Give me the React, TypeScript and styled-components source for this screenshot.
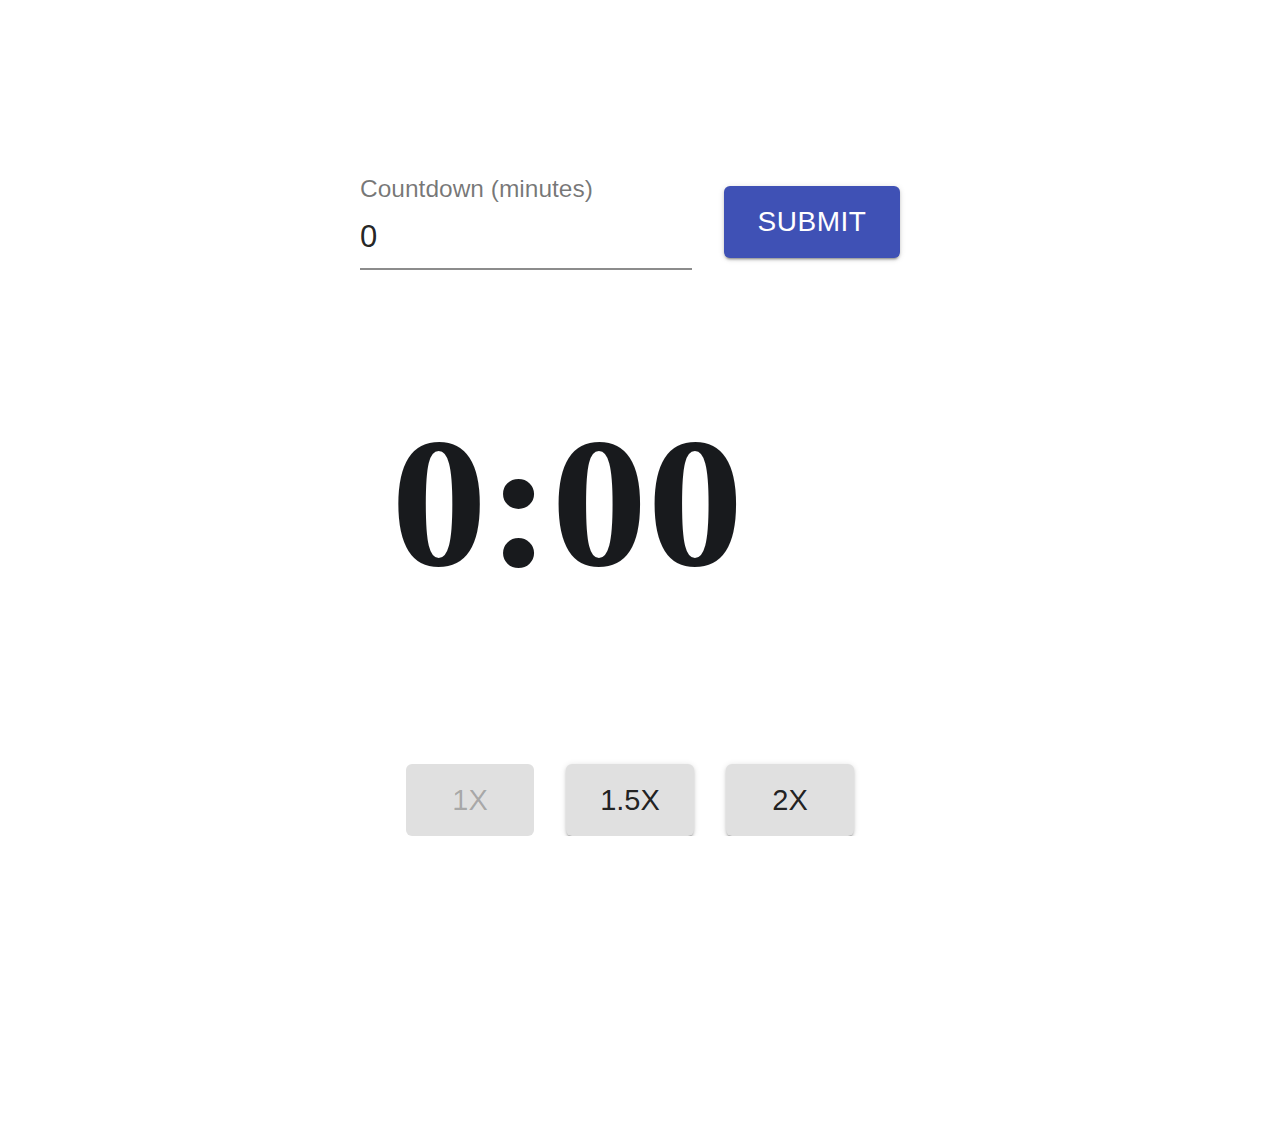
import React from "react";
import styled, { createGlobalStyle } from "styled-components";

const Global = createGlobalStyle`
  html, body { margin: 0; padding: 0; background: #fff; }
  body { font-family: "Liberation Sans", Arial, sans-serif; }
`;

const shadow =
  "0 3px 2px -2px rgba(0,0,0,0.28), 0 2px 3px 0 rgba(0,0,0,0.16), 0 1px 6px 0 rgba(0,0,0,0.12)";

const Page = styled.div`
  width: 1260px;
  padding-top: 173px;
  display: flex;
  flex-direction: column;
  align-items: center;
`;

const Form = styled.div`
  display: flex;
  align-items: flex-start;
  gap: 32px;
  width: 540px;
`;

const Field = styled.label`
  display: flex;
  flex-direction: column;
  width: 332px;
`;

const Label = styled.span`
  font-size: 24.5px;
  color: rgba(0, 0, 0, 0.54);
  line-height: 32px;
`;

const Input = styled.input`
  font-family: "Liberation Sans", Arial, sans-serif;
  font-size: 31px;
  color: rgba(0, 0, 0, 0.87);
  border: none;
  border-bottom: 2px solid #8c8c8c;
  outline: none;
  padding: 10px 0 9px;
  margin: 0;
  background: transparent;
  width: 100%;
  box-sizing: border-box;
  height: 65px;
`;

const Submit = styled.button`
  margin-top: 13px;
  width: 176px;
  height: 72px;
  border: none;
  border-radius: 6px;
  background: #3f51b5;
  color: #fff;
  font-family: "Liberation Sans", Arial, sans-serif;
  font-size: 28px;
  letter-spacing: 0.5px;
  box-shadow: ${shadow};
  cursor: pointer;
`;

const TimerRow = styled.div`
  width: 540px;
  margin-top: 140px;
  height: 186px;
  display: flex;
`;

const Timer = styled.div`
  font-family: "Liberation Serif", "Times New Roman", serif;
  font-weight: bold;
  font-size: 184px;
  line-height: 186px;
  color: #181a1d;
  margin-left: 31px;
  transform: scaleX(1.045);
  transform-origin: left center;
`;

const Speeds = styled.div`
  margin-top: 168px;
  display: flex;
  gap: 32px;
`;

const Speed = styled.button<{ $disabled?: boolean }>`
  width: 128px;
  height: 72px;
  border: none;
  border-radius: 6px;
  background: #e0e0e0;
  color: ${(p) => (p.$disabled ? "rgba(0,0,0,0.26)" : "rgba(0,0,0,0.87)")};
  font-family: "Liberation Sans", Arial, sans-serif;
  font-size: 29px;
  box-shadow: ${(p) => (p.$disabled ? "none" : shadow)};
`;

export default function App() {
  return (
    <>
      <Global />
      <Page>
        <Form>
          <Field>
            <Label>Countdown (minutes)</Label>
            <Input type="text" defaultValue="0" />
          </Field>
          <Submit>SUBMIT</Submit>
        </Form>
        <TimerRow>
          <Timer>0:00</Timer>
        </TimerRow>
        <Speeds>
          <Speed $disabled disabled>1X</Speed>
          <Speed>1.5X</Speed>
          <Speed>2X</Speed>
        </Speeds>
      </Page>
    </>
  );
}
